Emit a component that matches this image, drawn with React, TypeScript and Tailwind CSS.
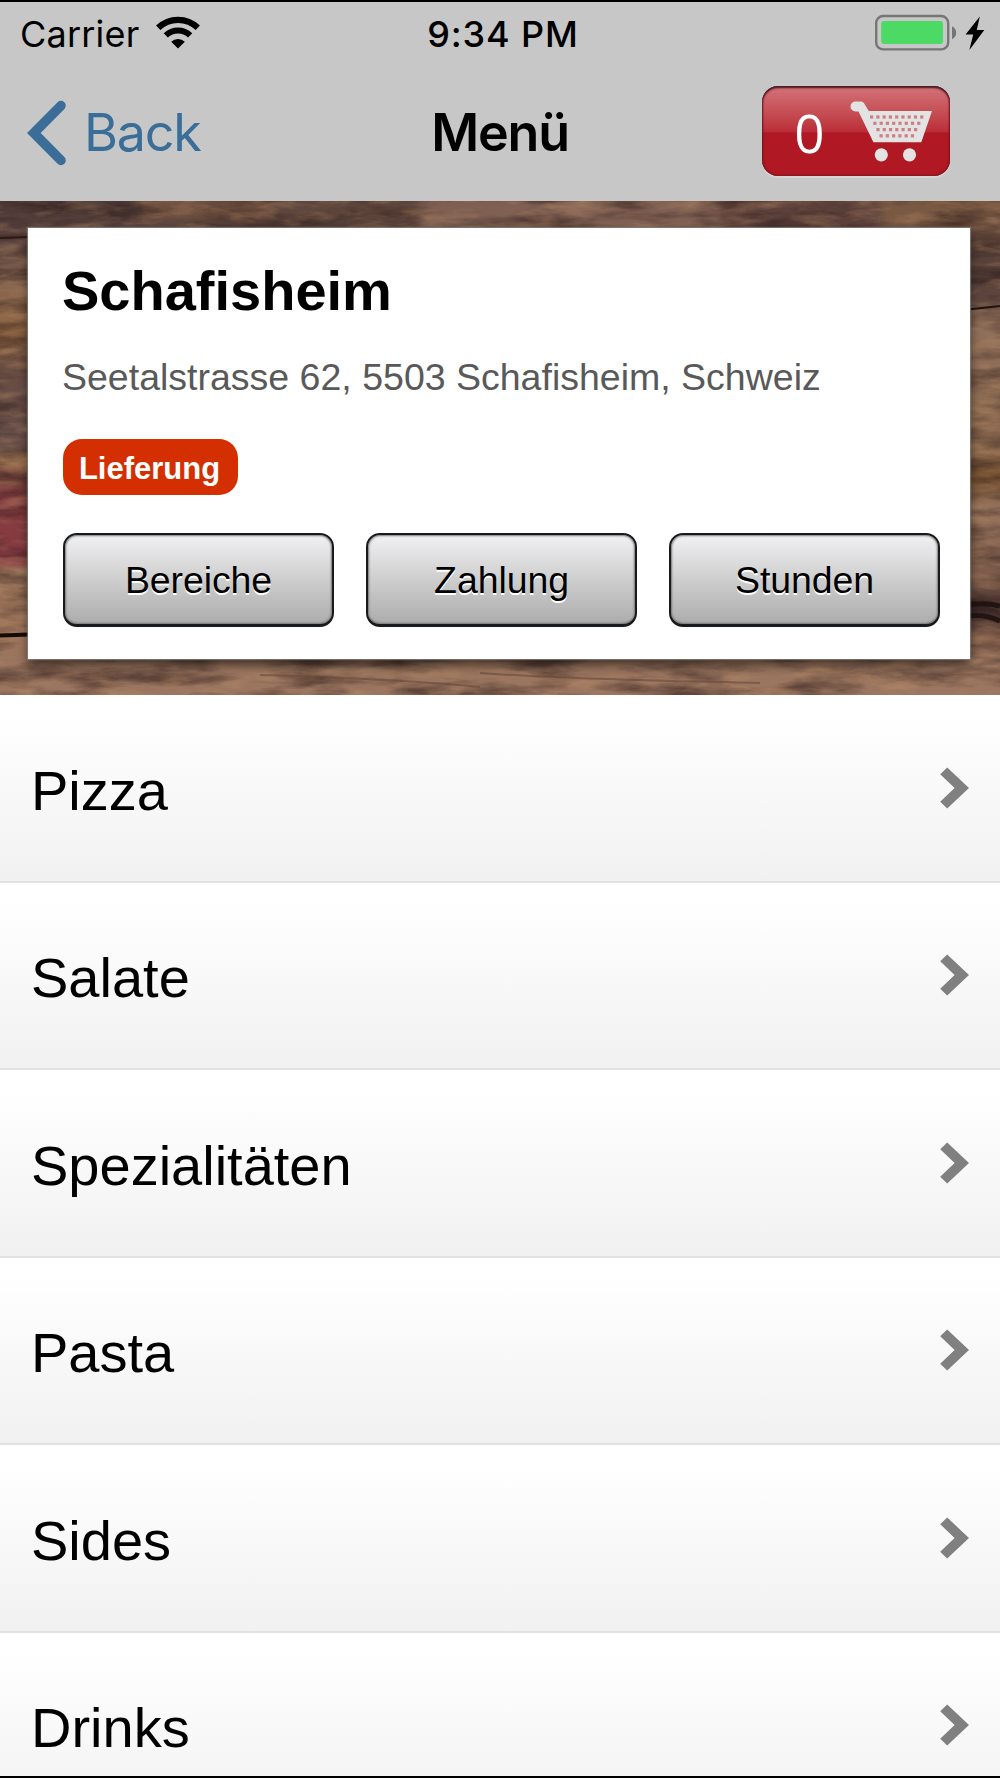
import React from 'react';

const categories = ['Pizza', 'Salate', 'Spezialitäten', 'Pasta', 'Sides', 'Drinks'];
const infoTabs = ['Bereiche', 'Zahlung', 'Stunden'];

// perforation rows of the cart basket: first x, y, number of holes
const basketRows = [
  { x: 20, y: 15.4, count: 9 },
  { x: 23.3, y: 21.7, count: 8 },
  { x: 26.4, y: 28, count: 7 },
  { x: 29.5, y: 34.2, count: 6 },
];

const WifiIcon = () => (
  <svg width="46" height="34" viewBox="0 0 46 34" fill="none" stroke="#000">
    <path d="M3.2 11.8 A 28.5 28.5 0 0 1 42.8 11.8" strokeWidth="6.2" />
    <path d="M10.8 19.4 A 17.8 17.8 0 0 1 35.2 19.4" strokeWidth="6" />
    <path d="M23 32.5 L16.2 25.8 A 9.7 9.7 0 0 1 29.8 25.8 Z" fill="#000" stroke="none" />
  </svg>
);

const BatteryIcon = () => (
  <svg width="112" height="38" viewBox="0 0 112 38">
    <rect x="1.2" y="2" width="72" height="33.4" rx="7" fill="none" stroke="#767676" strokeWidth="2.4" />
    <rect x="6.2" y="7" width="61.8" height="23" rx="3" fill="#4cd964" />
    <path d="M77 12.2 Q81.2 14.5 81.2 18.7 Q81.2 23 77 25.2 Z" fill="#767676" />
    <path d="M104.8 2.4 L90.6 20.6 H98.2 L94.4 36 L109.3 16 H101.8 Z" fill="#000" />
  </svg>
);

const CartIcon = () => (
  <svg width="84" height="62" viewBox="0 0 84 62">
    <path
      d="M5.5 0.5 H11 Q13 0.5 14.2 2.4 L18.8 10 H82 L71.3 41.3 H23.4 L8.5 10.5 H5.5 A5 5 0 0 1 5.5 0.5 Z"
      fill="#e3e3e3"
    />
    <circle cx="31.3" cy="53.8" r="6.6" fill="#e3e3e3" />
    <circle cx="59.5" cy="53.8" r="6.6" fill="#e3e3e3" />
    {basketRows.map((row) =>
      Array.from({ length: row.count }, (_, i) => (
        <rect key={`${row.y}-${i}`} x={row.x + i * 6.27} y={row.y - 1} width="3.2" height="3.2" fill="#cf7e84" />
      ))
    )}
  </svg>
);

// Weathered planks behind the restaurant card
const WoodBackground = () => (
  <svg className="absolute inset-0 size-full" viewBox="0 0 1000 494" preserveAspectRatio="none">
    <defs>
      <filter id="grain" x="0" y="0" width="100%" height="100%" colorInterpolationFilters="sRGB">
        <feTurbulence type="fractalNoise" baseFrequency="0.014 0.06" numOctaves="6" seed="8" />
        <feColorMatrix values="0 0 0 0 0.14  0 0 0 0 0.08  0 0 0 0 0.08  2.6 0 0 0 -1.05" />
      </filter>
      <filter id="highlight" x="0" y="0" width="100%" height="100%" colorInterpolationFilters="sRGB">
        <feTurbulence type="fractalNoise" baseFrequency="0.025 0.09" numOctaves="5" seed="21" />
        <feColorMatrix values="0 0 0 0 0.76  0 0 0 0 0.58  0 0 0 0 0.42  0 2.4 0 0 -1.1" />
      </filter>
      <filter id="soft" x="-30%" y="-30%" width="160%" height="160%">
        <feGaussianBlur stdDeviation="5" />
      </filter>
      <linearGradient id="left" x1="0" y1="0" x2="0" y2="1">
        <stop offset="0" stopColor="#54413c" />
        <stop offset="0.07" stopColor="#5b4440" />
        <stop offset="0.16" stopColor="#876652" />
        <stop offset="0.26" stopColor="#87603f" />
        <stop offset="0.35" stopColor="#6a4e45" />
        <stop offset="0.49" stopColor="#604a47" />
        <stop offset="0.52" stopColor="#96704f" />
        <stop offset="0.56" stopColor="#7c4842" />
        <stop offset="0.6" stopColor="#853c40" />
        <stop offset="0.73" stopColor="#853b41" />
        <stop offset="0.75" stopColor="#a57c60" />
        <stop offset="0.86" stopColor="#a1775e" />
        <stop offset="1" stopColor="#98715a" />
      </linearGradient>
      <linearGradient id="right" x1="0" y1="0" x2="0" y2="1">
        <stop offset="0" stopColor="#7a5942" />
        <stop offset="0.04" stopColor="#7a5a45" />
        <stop offset="0.1" stopColor="#574039" />
        <stop offset="0.2" stopColor="#5e463e" />
        <stop offset="0.25" stopColor="#90705a" />
        <stop offset="0.5" stopColor="#8c6a50" />
        <stop offset="0.56" stopColor="#75502e" />
        <stop offset="0.62" stopColor="#92705b" />
        <stop offset="0.76" stopColor="#7c5b4b" />
        <stop offset="0.83" stopColor="#3d2a28" />
        <stop offset="0.88" stopColor="#775646" />
        <stop offset="1" stopColor="#98705a" />
      </linearGradient>
      <linearGradient id="fade" x1="0" y1="0" x2="1" y2="0">
        <stop offset="0.1" stopColor="#000" />
        <stop offset="0.9" stopColor="#fff" />
      </linearGradient>
      <mask id="blend">
        <rect width="1000" height="494" fill="url(#fade)" />
      </mask>
    </defs>
    <rect width="1000" height="494" fill="url(#left)" />
    <rect width="1000" height="494" fill="url(#right)" mask="url(#blend)" />
    <g filter="url(#soft)">
      <rect x="140" y="-6" width="130" height="24" fill="#6f5140" />
      <rect x="190" y="18" width="250" height="12" fill="#503a34" />
      <rect x="420" y="-4" width="300" height="34" fill="#806152" />
      <rect x="720" y="0" width="160" height="32" fill="#5b413a" />
      <rect x="-20" y="450" width="1040" height="60" fill="#9a745e" />
    </g>
    <rect width="1000" height="494" filter="url(#grain)" opacity="0.5" />
    <rect width="1000" height="494" filter="url(#highlight)" opacity="0.4" />
    <path d="M0 37 L30 36" stroke="#2d1914" strokeWidth="2" />
    <path d="M0 434.5 L30 433.5" stroke="#150a06" strokeWidth="4" />
    <path d="M550 34 Q600 32 700 34" stroke="#1f1411" strokeWidth="2" fill="none" />
    <path d="M968 108.5 L1000 105" stroke="#20130e" strokeWidth="2.2" />
    <path d="M968 404 Q985 401 1000 405 M968 415 Q985 413 1000 420" stroke="#201513" strokeWidth="5" fill="none" />
    <path d="M260 474 Q400 478 480 486 M480 472 Q560 478 760 482" stroke="#67463890" strokeWidth="2" fill="none" />
  </svg>
);

const StatusBar = () => (
  <div className="grid h-[65px] grid-cols-3 text-black">
    <div className="flex items-start pl-[20px]">
      <span className="mt-[9px] text-[36px] leading-[46px] tracking-[0.2px]">Carrier</span>
      <span className="mt-[14px] ml-[16px]">
        <WifiIcon />
      </span>
    </div>
    <div className="mt-[9px] pl-[6px] text-center text-[36px] leading-[46px] font-medium tracking-[0.9px]">9:34 PM</div>
    <div className="flex justify-end pt-[12px] pr-[13px]">
      <BatteryIcon />
    </div>
  </div>
);

const NavBar = () => (
  <div className="grid h-[134px] grid-cols-3">
    <button className="flex items-start pt-[33px] pl-[26px] text-[#3a6e99]">
      <svg width="40" height="66" viewBox="0 0 40 66" fill="none" stroke="currentColor" strokeWidth="9.6" strokeLinecap="round" strokeLinejoin="miter">
        <path d="M35 5.6 L7.8 33 L35 60.4" />
      </svg>
      <span className="mt-[2px] ml-[18px] text-[52px] leading-[62px] tracking-[-1.2px]">Back</span>
    </button>
    <h1 className="mt-[35px] text-center text-[52px] leading-[62px] font-semibold tracking-[-1.2px] text-black">Menü</h1>
    <div className="flex justify-end pt-[19px] pr-[50px]">
      <button className="flex h-[90px] w-[188px] rounded-[16px] bg-linear-to-b from-[#d2737a] from-0% via-[#bb2c38] via-51% to-[#b01823] to-52% shadow-[inset_0_2px_2px_#4a1c22,inset_0_0_2px_1px_#7d1820,0_2px_1px_#d6d6d6]">
        <span className="mt-[14px] ml-[32px] w-[31px] font-['Open_Sans'] text-[53px] leading-[66px] text-white">0</span>
        <span className="mt-[15px] ml-[25px]">
          <CartIcon />
        </span>
      </button>
    </div>
  </div>
);

const RestaurantCard = () => (
  <section className="relative h-[494px] overflow-hidden px-7 pt-[27px]">
    <WoodBackground />
    <div className="relative h-[431px] w-[942px] bg-white pt-[31px] pl-[35px] shadow-[0_0_1px_1px_rgba(130,125,118,0.8),0_6px_10px_rgba(0,0,0,0.6)]">
      <h2 className="ml-[-1px] text-[56px] leading-[64px] font-bold text-black">Schafisheim</h2>
      <p className="mt-[32px] ml-[-1px] text-[37.5px] leading-[44px] text-[#595959]">Seetalstrasse 62, 5503 Schafisheim, Schweiz</p>
      <span className="mt-[40px] flex h-[56px] w-[175px] items-center justify-center rounded-[19px] bg-[#d32f00] pt-[2px] pr-[2px] text-[31px] leading-none font-bold text-white">
        Lieferung
      </span>
      <div className="mt-[38px] flex gap-[32px]">
        {infoTabs.map((label) => (
          <button
            key={label}
            className="h-[94px] w-[271px] rounded-[14px] border-2 border-b-[3px] border-[#181b1d] bg-linear-to-b from-[#f1f1f3] to-[#acacac] text-[37.5px] leading-[44px] tracking-[-0.1px] text-black shadow-[inset_0_0_2px_1px_#777] [text-shadow:0_2px_0_#fff]"
          >
            {label}
          </button>
        ))}
      </div>
    </div>
  </section>
);

const CategoryRow: React.FC<{ name: string }> = ({ name }) => (
  <li className="flex h-[187.5px] shrink-0 items-center justify-between border-b-2 border-[#e2e2e2] bg-linear-to-b from-white from-10% to-[#f1f1f1] pr-[31px] pl-[31px]">
    <span className="mt-[6px] text-[56px] leading-[64px] text-black">{name}</span>
    <svg width="29" height="42" viewBox="0 0 29 42" fill="#808080">
      <path d="M7.2 0.5 L29 21 L7.2 41.5 L0.2 34.8 L14.6 21 L0.2 7.2 Z" />
    </svg>
  </li>
);

export default function App() {
  return (
    <div className="flex h-[1778px] w-[1000px] flex-col overflow-hidden border-t-2 border-b-2 border-black bg-white font-['Liberation_Sans',Arial,sans-serif]">
      <header className="shrink-0 bg-[#c7c7c7] font-['Inter',sans-serif]">
        <StatusBar />
        <NavBar />
      </header>
      <main>
        <RestaurantCard />
        <ul>
          {categories.map((name) => (
            <CategoryRow key={name} name={name} />
          ))}
        </ul>
      </main>
    </div>
  );
}
